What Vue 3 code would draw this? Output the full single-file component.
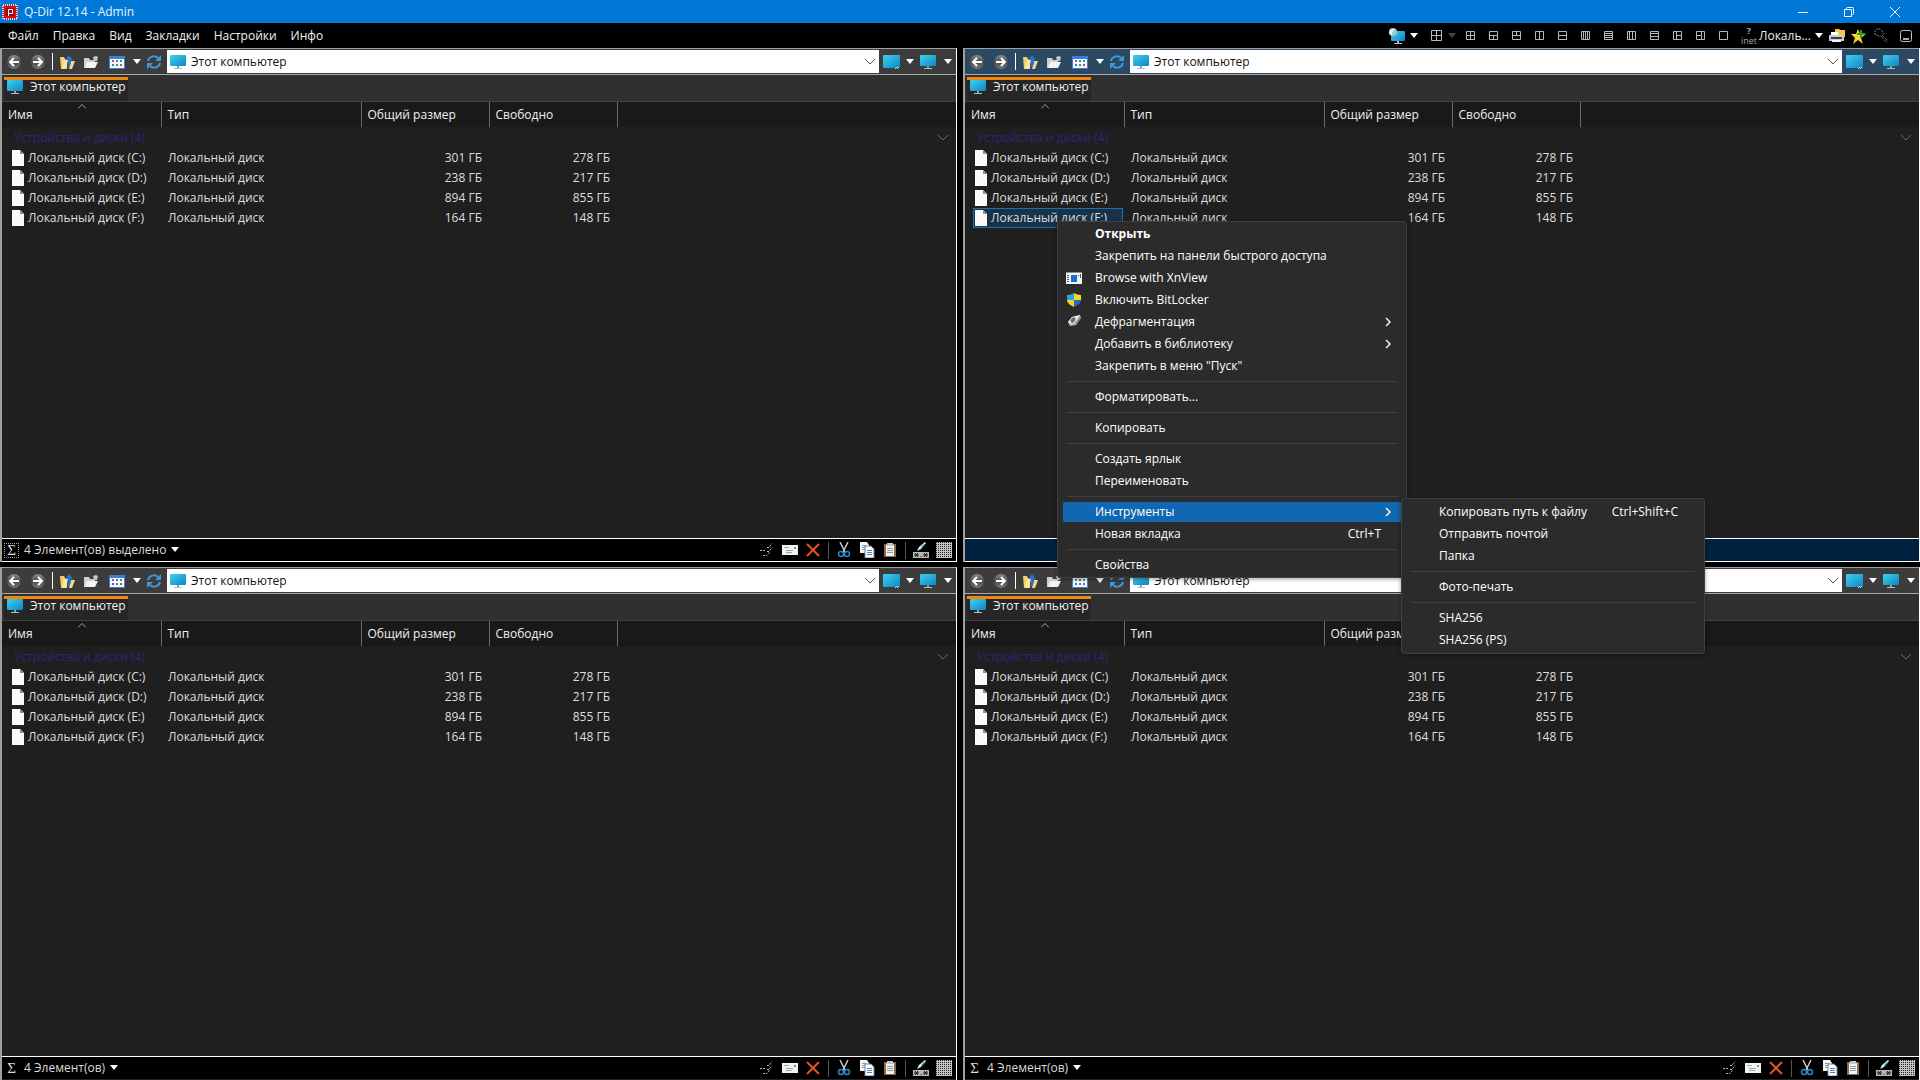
<script setup>
const menus = ['Файл', 'Правка', 'Вид', 'Закладки', 'Настройки', 'Инфо']

// Line paths of the pane layout buttons, drawn inside a 9x9 frame
const layouts = [
  'M4.5 1V8M1 4.5H8',
  'M1 4.5H8M4.5 5V8',
  'M1 4.5H8M4.5 4V1',
  'M4.5 1V8',
  'M1 4.5H8',
  'M2.5 1V8M4.5 1V8M6.5 1V8',
  'M1 2.5H8M1 4.5H8M1 6.5H8',
  'M2.5 1V8M5.5 1V8',
  'M1 2.5H8M1 5.5H8',
  'M3.5 1V8M4 4.5H8',
  'M5.5 1V8M1 4.5H5',
  ''
]

const drives = [
  { name: 'Локальный диск (C:)', type: 'Локальный диск', total: '301 ГБ', free: '278 ГБ' },
  { name: 'Локальный диск (D:)', type: 'Локальный диск', total: '238 ГБ', free: '217 ГБ' },
  { name: 'Локальный диск (E:)', type: 'Локальный диск', total: '894 ГБ', free: '855 ГБ' },
  { name: 'Локальный диск (F:)', type: 'Локальный диск', total: '164 ГБ', free: '148 ГБ' }
]

const panes = [
  { id: 1, status: '4 Элемент(ов) выделено', framed: true },
  { id: 2, status: '', active: true, selected: 3 },
  { id: 3, status: '4 Элемент(ов)' },
  { id: 4, status: '4 Элемент(ов)' }
]

const contextMenu = [
  { label: 'Открыть', bold: true },
  { label: 'Закрепить на панели быстрого доступа' },
  { label: 'Browse with XnView', icon: 'xnview' },
  { label: 'Включить BitLocker', icon: 'shield' },
  { label: 'Дефрагментация', icon: 'defrag', more: true },
  { label: 'Добавить в библиотеку', more: true },
  { label: 'Закрепить в меню "Пуск"' },
  { sep: true },
  { label: 'Форматировать...' },
  { sep: true },
  { label: 'Копировать' },
  { sep: true },
  { label: 'Создать ярлык' },
  { label: 'Переименовать' },
  { sep: true },
  {
    label: 'Инструменты',
    more: true,
    open: true,
    children: [
      { label: 'Копировать путь к файлу', key: 'Ctrl+Shift+C' },
      { label: 'Отправить почтой' },
      { label: 'Папка' },
      { sep: true },
      { label: 'Фото-печать' },
      { sep: true },
      { label: 'SHA256' },
      { label: 'SHA256 (PS)' }
    ]
  },
  { label: 'Новая вкладка', key: 'Ctrl+T' },
  { sep: true },
  { label: 'Свойства' }
]
</script>

<template>
  <div class="app">
    <svg class="sprite" aria-hidden="true">
      <defs>
        <linearGradient id="screen" x1="0" y1="0" x2="1" y2="1">
          <stop offset="0" stop-color="#3fd0ee" />
          <stop offset="1" stop-color="#0f86c4" />
        </linearGradient>
        <linearGradient id="ball" x1="0" y1="0" x2="0" y2="1">
          <stop offset="0" stop-color="#8c8c8c" />
          <stop offset="0.5" stop-color="#4a4a4a" />
          <stop offset="1" stop-color="#777" />
        </linearGradient>
        <pattern id="dots" width="2" height="2" patternUnits="userSpaceOnUse">
          <rect width="2" height="2" fill="#c4c4c4" />
          <rect width="1" height="1" fill="#222" />
        </pattern>
      </defs>
      <symbol id="i-monitor" viewBox="0 0 16 16">
        <rect x="0" y="1" width="16" height="11" rx="1" fill="url(#screen)" />
        <path d="M7 12h2v2H7z" fill="#8a9aa4" />
        <path d="M4 14h8v1H4z" fill="#b4bec4" />
      </symbol>
      <symbol id="i-screen" viewBox="0 0 18 16">
        <rect x="0" y="1" width="17" height="13" rx="1" fill="url(#screen)" />
        <path d="M13 13h1v1h-1zM15 13h1v1h-1zM12 14h1v1h-1zM14 14h1v1h-1z" fill="#bfe8f8" />
      </symbol>
      <symbol id="i-back" viewBox="0 0 16 16">
        <circle cx="8" cy="8" r="7" fill="url(#ball)" />
        <path d="M13 8H4M8 4L4 8l4 4" fill="none" stroke="#fff" stroke-width="2" />
      </symbol>
      <symbol id="i-forward" viewBox="0 0 16 16">
        <circle cx="8" cy="8" r="7" fill="url(#ball)" />
        <path d="M3 8h9M8 4l4 4-4 4" fill="none" stroke="#fff" stroke-width="2" />
      </symbol>
      <symbol id="i-up" viewBox="0 0 16 16">
        <path d="M1 3h4l1 2h2v10H2z" fill="#f2d16b" />
        <path d="M3 15L5 6h4l-2 9z" fill="#fbe79b" />
        <path d="M10 15l2-8h4l-3 8z" fill="#f2d98a" />
        <path d="M10 1l4 5h-2c0 4-1 7-4 8 1-3 1-5 1-8H6z" fill="#2a6fd0" />
      </symbol>
      <symbol id="i-folder" viewBox="0 0 16 16">
        <path d="M1 4h5l1 2h5v3L3 14H1z" fill="#cfcfcf" />
        <path d="M4 8h11l-3 6H2z" fill="#f4f4f4" />
        <path d="M10 3l3-1 2 1-1 4h-3z" fill="#c4c4c4" />
      </symbol>
      <symbol id="i-view" viewBox="0 0 16 16">
        <rect x="0" y="2" width="16" height="13" fill="#3a7fd8" />
        <rect x="1" y="5" width="14" height="9" fill="#f6f8fc" />
        <path d="M3 6h2v2H3zM11 10h2v2h-2z" fill="#d04848" />
        <path d="M7 6h2v2H7zM3 10h2v2H3z" fill="#3a6fd0" />
        <path d="M11 6h2v2h-2zM7 10h2v2H7z" fill="#2f9a62" />
      </symbol>
      <symbol id="i-refresh" viewBox="0 0 16 16">
        <path d="M2 7a6 6 0 0 1 10-3M14 9a6 6 0 0 1-10 3" fill="none" stroke="#3f97dc" stroke-width="2" />
        <path d="M15 1v6H9zM1 15V9h6z" fill="#3f97dc" />
      </symbol>
      <symbol id="i-down" viewBox="0 0 8 6">
        <path d="M0 0h8L4 5z" fill="currentColor" />
      </symbol>
      <symbol id="i-chevron" viewBox="0 0 12 8">
        <path d="M1 1l5 5 5-5" fill="none" stroke="currentColor" />
      </symbol>
      <symbol id="i-more" viewBox="0 0 6 10">
        <path d="M1 1l4 4-4 4" fill="none" stroke="#f2f2f2" stroke-width="1.5" />
      </symbol>
      <symbol id="i-file" viewBox="0 0 12 16">
        <path d="M0 0h8l4 4v12H0z" fill="#fafafa" />
        <path d="M8 0v4h4z" fill="#8f8f8f" />
      </symbol>
      <symbol id="i-xnview" viewBox="0 0 16 16">
        <path d="M0 2h16v12H0z" fill="#f4f4f4" />
        <path d="M0 2h16v1H0z" fill="#8d8d8d" />
        <path d="M5 5h6v7H5z" fill="#1273cf" />
        <path d="M1 5h2v1H1zM1 7h2v1H1zM1 9h2v1H1zM1 11h2v1H1zM12 5h1v1h-1zM14 4h1v4h-1z" fill="#555" />
      </symbol>
      <symbol id="i-shield" viewBox="0 0 16 16">
        <path d="M8 1C6 2 4 3 1 3v5h7z" fill="#2aa3dc" />
        <path d="M8 1c2 1 4 2 7 2v5H8z" fill="#fbd32c" />
        <path d="M1 8h7v7c-4-2-7-4-7-7z" fill="#fbd32c" />
        <path d="M15 8H8v7c4-2 7-4 7-7z" fill="#1b6fc2" />
      </symbol>
      <symbol id="i-defrag" viewBox="0 0 16 16">
        <path d="M2 8l4-5 8-2 1 3-5 7-6 1z" fill="#b9b9b9" />
        <path d="M2 8l4-5 8-2-4 7-5 2z" fill="#ececec" />
        <ellipse cx="7" cy="6" rx="2" ry="3" fill="#6a6a6a" transform="rotate(35 7 6)" />
        <path d="M9 9l5-7 1 2-5 7z" fill="#8c8c8c" />
      </symbol>
      <symbol id="i-checks" viewBox="0 0 16 16">
        <path d="M8 5.5h2l3-4M8 9.5h2l3-4M1 8.5h5M4 13.5h4l3-4" fill="none" stroke="#b6b6b6" stroke-dasharray="2 1" />
      </symbol>
      <symbol id="i-mail" viewBox="0 0 16 16">
        <path d="M0 3h16v10H0z" fill="#f2f2f2" />
        <path d="M12 5h2v2h-2z" fill="#3aa0e0" />
        <path d="M2 5h5v1H2zM4 8h7v1H4zM4 10h6v1H4z" fill="#9aa4ac" />
      </symbol>
      <symbol id="i-delete" viewBox="0 0 16 16">
        <path d="M2 2l12 12M14 2L2 14" stroke="#e2551c" stroke-width="2" />
      </symbol>
      <symbol id="i-cut" viewBox="0 0 16 16">
        <path d="M4 0l5 10M12 0L7 10" stroke="#c8ccd0" stroke-width="1.5" />
        <circle cx="5" cy="12" r="2.5" fill="none" stroke="#2b87c8" stroke-width="1.5" />
        <circle cx="11" cy="12" r="2.5" fill="none" stroke="#2b87c8" stroke-width="1.5" />
      </symbol>
      <symbol id="i-copy" viewBox="0 0 16 16">
        <path d="M1 0h7l2 3v8H1z" fill="#f4f4f4" />
        <path d="M3 3h4v1H3zM3 5h5v1H3zM3 7h3v1H3z" fill="#8a98b0" />
        <path d="M6 4h6l3 3v9H6z" fill="#fff" stroke="#6f8096" stroke-width="1" />
        <path d="M8 8h5v1H8zM8 10h5v1H8zM8 12h5v1H8z" fill="#4a7fc0" />
      </symbol>
      <symbol id="i-paste" viewBox="0 0 16 16">
        <path d="M2 2h12v13H2z" fill="#8a6a4c" />
        <path d="M4 3h8v11H4z" fill="#f2f2f2" />
        <path d="M5 1h6v3H5z" fill="#c4c4c4" />
        <path d="M5 6h6v1H5zM5 8h6v1H5zM5 10h6v1H5z" fill="#8e9aa4" />
      </symbol>
      <symbol id="i-brush" viewBox="0 0 16 16">
        <path d="M4 9l2-4 6-5 1 1-5 6z" fill="#eee" />
        <path d="M8 5l3-3 1 1-3 3z" fill="#1e9ad0" />
        <path d="M0 10h16v6H0z" fill="#b8b8b8" />
        <path d="M2 11l3 4M5 11l-3 4M1 13h5M11 11l3 4M14 11l-3 4M10 13h5M8 14v1" stroke="#161616" />
      </symbol>
      <symbol id="i-raster" viewBox="0 0 16 16">
        <rect width="16" height="16" fill="url(#dots)" />
      </symbol>
      <symbol id="i-net" viewBox="0 0 16 16">
        <rect x="2" y="3" width="14" height="10" rx="1" fill="url(#screen)" />
        <path d="M8 13h2v2H8zM5 15h8v1H5z" fill="#b4bec4" />
        <circle cx="4" cy="4" r="4" fill="#9cc4d8" />
        <path d="M0 4c1-3 4-3 6-3-1 2-3 2-3 6-2 0-3-1-3-3z" fill="#e6f0f2" />
      </symbol>
      <symbol id="i-printer" viewBox="0 0 16 16">
        <path d="M6 1h4l1 1h5v7H6z" fill="#f3c64a" />
        <path d="M2 4h7v4H2z" fill="#fff" />
        <path d="M0 7h15v6H0z" fill="#c9cdd0" />
        <path d="M2 9h11v2H2z" fill="#3a3f44" />
        <path d="M3 12h9v2H3z" fill="#f4f4f4" />
      </symbol>
      <symbol id="i-star" viewBox="0 0 16 16">
        <path d="M7 1l2 5 6 0-5 4 2 6-5-4-5 4 2-6-4-4h5z" fill="#fbd52c" />
        <path d="M9 2h2v3h3v2h-3v3H9V7H6V5h3z" fill="#2f9e2c" />
      </symbol>
      <symbol id="i-tool" viewBox="0 0 16 16">
        <path d="M2 6V3l2-2h3l3 3v3M2 6l3 2h3l6 7M9 7l6 6" fill="none" stroke="#a8a8a8" stroke-dasharray="1 1" />
      </symbol>
      <symbol id="i-panel" viewBox="0 0 14 14">
        <rect x="1.5" y="1.5" width="11" height="11" rx="2" fill="none" stroke="#c8c8c8" />
        <path d="M4 10h6" stroke="#e8e8e8" stroke-width="1.5" />
      </symbol>
    </svg>

    <header class="titlebar">
      <svg class="logo" viewBox="0 0 16 16">
        <rect x="1" y="1" width="14" height="14" fill="#d40f14" stroke="#f2c9c9" stroke-width="2" stroke-dasharray="1 1" />
        <path d="M4 4h8v8H4z" fill="#8c0a0c" />
        <path d="M6.5 12V5.5h4v4h-4" fill="none" stroke="#fff" />
      </svg>
      <h1>Q-Dir 12.14 - Admin</h1>
      <div class="window-buttons">
        <button aria-label="Свернуть"><svg viewBox="0 0 12 12"><path d="M1 6.5h10" /></svg></button>
        <button aria-label="Восстановить">
          <svg viewBox="0 0 12 12"><path d="M1.5 3.5h7v7h-7zM3.5 3V2.5q0-1 1-1h5q1 0 1 1v5q0 1-1 1H9" /></svg>
        </button>
        <button aria-label="Закрыть"><svg viewBox="0 0 12 12"><path d="M1 1l10 10M11 1L1 11" /></svg></button>
      </div>
    </header>

    <nav class="menubar">
      <button v-for="m in menus" :key="m" class="menu">{{ m }}</button>
      <div class="tools">
        <button class="net" aria-label="Сеть"><svg class="s16"><use href="#i-net" /></svg><svg class="down"><use href="#i-down" /></svg></button>
        <button class="quad" aria-label="Вид окон">
          <svg viewBox="0 0 11 11"><path d="M.5 .5h10v10H.5zM5.5 1v9M1 5.5h9" /></svg>
          <svg class="down dim"><use href="#i-down" /></svg>
        </button>
        <button v-for="(d, i) in layouts" :key="i" class="layout" :aria-label="'Раскладка ' + (i + 1)">
          <svg viewBox="0 0 9 9"><path :d="'M.5 .5H8.5V8.5H.5Z' + d" /></svg>
        </button>
        <button class="inet"><b>?</b><span>inet</span></button>
        <button class="local">Локаль...<svg class="down"><use href="#i-down" /></svg></button>
        <button class="tool" aria-label="Печать"><svg class="s16"><use href="#i-printer" /></svg></button>
        <button class="tool" aria-label="Избранное"><svg class="s16"><use href="#i-star" /></svg></button>
        <button class="tool" aria-label="Инструмент"><svg class="s16"><use href="#i-tool" /></svg></button>
        <button class="tool last" aria-label="Панель"><svg class="s14"><use href="#i-panel" /></svg></button>
      </div>
    </nav>

    <main class="workspace">
      <section v-for="p in panes" :key="p.id" class="pane" :class="{ active: p.active }">
        <div class="toolbar">
          <button class="nav" aria-label="Назад"><svg class="s16"><use href="#i-back" /></svg></button>
          <button class="nav" aria-label="Вперёд"><svg class="s16"><use href="#i-forward" /></svg></button>
          <i class="divider"></i>
          <button class="nav" aria-label="Вверх"><svg class="s16"><use href="#i-up" /></svg></button>
          <button class="nav" aria-label="Папка"><svg class="s16"><use href="#i-folder" /></svg></button>
          <button class="pair view" aria-label="Представление"><svg class="s16"><use href="#i-view" /></svg><svg class="down"><use href="#i-down" /></svg></button>
          <button class="refresh" aria-label="Обновить"><svg class="s16"><use href="#i-refresh" /></svg></button>
          <div class="address">
            <svg class="s16"><use href="#i-monitor" /></svg>
            <select aria-label="Адрес"><option>Этот компьютер</option></select>
            <svg class="chevron"><use href="#i-chevron" /></svg>
          </div>
          <button class="pair screen" aria-label="Экран"><svg class="s18"><use href="#i-screen" /></svg><svg class="down"><use href="#i-down" /></svg></button>
          <button class="pair end" aria-label="Компьютер"><svg class="s16"><use href="#i-monitor" /></svg><svg class="down"><use href="#i-down" /></svg></button>
        </div>
        <div class="tabs">
          <button class="tab"><svg class="s16"><use href="#i-monitor" /></svg>Этот компьютер</button>
        </div>
        <div class="list">
          <table>
            <colgroup><col class="c-name" /><col class="c-type" /><col class="c-size" /><col class="c-size" /><col /></colgroup>
            <thead>
              <tr>
                <th scope="col"><svg class="sort" viewBox="0 0 8 5"><path d="M0 4.5l4-4 4 4" /></svg>Имя</th>
                <th scope="col">Тип</th>
                <th scope="col">Общий размер</th>
                <th scope="col">Свободно</th>
                <td></td>
              </tr>
            </thead>
            <tbody>
              <tr class="group">
                <th colspan="5" scope="colgroup"><div>Устройства и диски (4)<svg class="chevron"><use href="#i-chevron" /></svg></div></th>
              </tr>
              <tr v-for="(d, i) in drives" :key="d.name">
                <td class="name"><div :class="{ selected: p.selected === i }"><svg><use href="#i-file" /></svg>{{ d.name }}</div></td>
                <td>{{ d.type }}</td>
                <td class="num">{{ d.total }}</td>
                <td class="num">{{ d.free }}</td>
                <td></td>
              </tr>
            </tbody>
          </table>
        </div>
        <footer class="status">
          <template v-if="p.status">
            <button class="sum" :class="{ framed: p.framed }"><span>Σ</span></button>
            <button class="count">{{ p.status }}<svg class="down"><use href="#i-down" /></svg></button>
            <div class="actions">
              <button aria-label="Отметить"><svg class="s16"><use href="#i-checks" /></svg></button>
              <button aria-label="Почта"><svg class="s16"><use href="#i-mail" /></svg></button>
              <button aria-label="Удалить"><svg class="s16"><use href="#i-delete" /></svg></button>
              <i></i>
              <button aria-label="Вырезать"><svg class="s16"><use href="#i-cut" /></svg></button>
              <button aria-label="Копировать"><svg class="s16"><use href="#i-copy" /></svg></button>
              <button aria-label="Вставить"><svg class="s16"><use href="#i-paste" /></svg></button>
              <i></i>
              <button aria-label="Переименовать"><svg class="s16"><use href="#i-brush" /></svg></button>
              <button aria-label="Сетка"><svg class="s16"><use href="#i-raster" /></svg></button>
            </div>
          </template>
        </footer>

        <ul v-if="p.active" class="popup">
          <li v-for="(m, i) in contextMenu" :key="i" :class="{ sep: m.sep, open: m.open }">
            <button v-if="!m.sep" :class="{ bold: m.bold }">
              <span class="icon"><svg v-if="m.icon" class="s16"><use :href="'#i-' + m.icon" /></svg></span>
              <span>{{ m.label }}</span>
              <kbd v-if="m.key">{{ m.key }}</kbd>
              <svg v-if="m.more" class="more"><use href="#i-more" /></svg>
            </button>
            <ul v-if="m.children" class="popup sub">
              <li v-for="(c, j) in m.children" :key="j" :class="{ sep: c.sep }">
                <button v-if="!c.sep">
                  <span class="icon"></span>
                  <span>{{ c.label }}</span>
                  <kbd v-if="c.key">{{ c.key }}</kbd>
                </button>
              </li>
            </ul>
          </li>
        </ul>
      </section>
    </main>
  </div>
</template>

<style>
body {
  margin: 0;
  background: #000;
}
</style>

<style scoped>
* {
  box-sizing: border-box;
}
.app {
  display: flex;
  flex-direction: column;
  min-height: 100vh;
  background: #000;
  color: #f0f0f0;
  font: 12px/16px "Open Sans", "Noto Sans", sans-serif;
}
.sprite {
  position: absolute;
  width: 0;
  height: 0;
}
svg {
  display: block;
  flex: none;
}
button,
select {
  margin: 0;
  padding: 0;
  border: 0;
  background: none;
  color: inherit;
  font: inherit;
  white-space: nowrap;
}
.s14 { width: 14px; height: 14px; }
.s16 { width: 16px; height: 16px; }
.s18 { width: 18px; height: 16px; }
.down { width: 8px; height: 6px; color: #fff; }
.dim { color: #444; }
.chevron { width: 12px; height: 8px; }

.titlebar {
  display: flex;
  align-items: center;
  height: 23px;
  padding: 0 2px;
  background: #0078d7;
  color: #e6f3ff;
}
.logo { width: 16px; height: 16px; }
h1 {
  margin: 0 0 0 6px;
  font: inherit;
}
.window-buttons {
  display: flex;
  margin-left: auto;
}
.window-buttons button {
  display: flex;
  justify-content: center;
  width: 46px;
}
.window-buttons svg {
  width: 12px;
  height: 12px;
  fill: none;
  stroke: #fff;
}

.menubar {
  display: flex;
  align-items: center;
  gap: 14px;
  height: 25px;
  padding-left: 8px;
}
.tools {
  display: flex;
  align-items: center;
  margin-left: auto;
}
.tools button {
  display: flex;
  align-items: center;
}
.tools .net { gap: 5px; width: 42px; padding-left: 1px; }
.tools .quad { gap: 6px; width: 29px; padding-left: 1px; }
.quad svg:first-child { width: 11px; height: 11px; }
.quad,
.layout {
  fill: none;
  stroke: #b8b8b8;
}
.quad .down { stroke: none; }
.tools .layout {
  justify-content: center;
  width: 23px;
}
.layout svg { width: 9px; height: 9px; }
.tools .inet {
  flex-direction: column;
  width: 20px;
  margin-left: 4px;
  color: #a8a8a8;
  font-size: 9px;
  line-height: 10px;
}
.tools .local {
  justify-content: space-between;
  width: 64px;
  margin-right: 3px;
}
.tools .tool { justify-content: center; width: 22px; }
.tools .last { width: 28px; }

.workspace {
  display: grid;
  grid-template-columns: 1fr 1fr;
  grid-template-rows: calc(50vh - 26px) 1fr;
  gap: 5px 6px;
  flex: 1;
}
.pane {
  position: relative;
  display: flex;
  flex-direction: column;
  min-width: 0;
  border: solid #a0a0a0;
  border-width: 1px 1px 0 2px;
  border-right-color: #fff;
}
.toolbar {
  display: flex;
  align-items: center;
  height: 26px;
  border-bottom: 1px solid #a8a8a8;
  background: #3c3c3c;
}
.active .toolbar { background: #2b4963; }
.nav {
  display: flex;
  justify-content: center;
  width: 24px;
}
.divider {
  width: 1px;
  height: 17px;
  margin: 0 2px;
  background: #fff;
}
.pair {
  display: flex;
  align-items: center;
  gap: 8px;
  width: 37px;
}
.view { margin-left: 6px; }
.screen {
  gap: 5px;
  margin-left: 4px;
}
.end { width: 36px; }
.refresh {
  width: 16px;
  margin-right: 5px;
}
.address {
  display: flex;
  align-items: center;
  flex: 1;
  height: 23px;
  padding: 0 3px;
  background: #fff;
  color: #111;
}
.address select {
  flex: 1;
  padding-left: 5px;
  appearance: none;
}
.address .chevron { color: #555; }

.tabs {
  display: flex;
  align-items: flex-end;
  height: 27px;
  padding-left: 2px;
  border-bottom: 1px solid #404040;
  background: #303030;
}
.tab {
  display: flex;
  align-items: center;
  gap: 7px;
  height: 24px;
  width: 124px;
  padding: 0 3px 7px;
  border-top: 3px solid #f0870e;
  background: #262626;
}

.list {
  flex: 1;
  background: #1f1f1f;
}
table {
  width: 100%;
  table-layout: fixed;
  border-collapse: collapse;
}
.c-name { width: 159px; }
.c-type { width: 200px; }
.c-size { width: 128px; }
th,
td {
  padding: 0 7px;
  font-weight: 400;
  text-align: left;
  white-space: nowrap;
}
thead tr {
  height: 25px;
  background: #191919;
}
thead th {
  position: relative;
  padding-left: 6px;
  border-right: 1px solid #6a6a6a;
}
.sort {
  position: absolute;
  top: 2px;
  left: calc(50% - 3px);
  width: 8px;
  height: 5px;
  fill: none;
  stroke: #a0a0a0;
}
tbody tr { height: 20px; }
tbody td { color: #dedede; }
.group { height: 21px; }
.group th { padding: 0 7px 0 12px; color: #27277c; }
.group div {
  display: flex;
  align-items: center;
  justify-content: space-between;
}
.group .chevron { color: #6a6a6a; }
td.name { padding: 0; }
.name div {
  display: flex;
  align-items: center;
  gap: 4px;
  width: 150px;
  height: 20px;
  margin-left: 8px;
  padding-left: 1px;
  border: 1px solid transparent;
}
.name svg { width: 12px; height: 16px; }
.name .selected {
  border-color: #2171a8;
  background: #18324a;
}
td.num { text-align: right; }

.status {
  display: flex;
  align-items: center;
  height: 24px;
  border: solid #fff;
  border-width: 1px 0;
  padding-left: 2px;
  color: #dcdcdc;
}
.pane:nth-child(n + 3) .status { border-bottom-color: #222; }
.active .status { background: #002240; }
.sum {
  width: 15px;
  height: 15px;
  border: 1px dotted transparent;
  font: 15px/13px "Liberation Serif", serif;
}
.framed { border-color: #a8a8a8; }
.count {
  display: flex;
  align-items: center;
  gap: 5px;
  margin-left: 5px;
}
.actions {
  display: flex;
  align-items: center;
  gap: 7px;
  margin-left: auto;
  padding-right: 4px;
}
.actions i {
  width: 1px;
  height: 17px;
  background: #555;
}

.popup {
  position: absolute;
  z-index: 2;
  top: 172px;
  left: 92px;
  width: 350px;
  margin: 0;
  padding: 1px 5px;
  border: 1px solid #404040;
  border-radius: 3px;
  background: #2b2b2b;
  box-shadow: 0 1px 4px rgba(0, 0, 0, 0.4);
  list-style: none;
}
.popup li {
  position: relative;
  height: 22px;
  padding: 1px 0;
}
.popup li.sep {
  height: 9px;
  padding: 4px 4px;
}
.popup li.sep::before {
  content: "";
  display: block;
  height: 1px;
  background: #404040;
}
.popup button {
  display: flex;
  align-items: center;
  width: 338px;
  height: 20px;
  padding: 0 10px 0 3px;
  border-radius: 2px;
  color: #fff;
}
.popup .open > button { background: #1167b1; }
.popup .bold { font-weight: 700; }
.icon { width: 29px; }
kbd {
  margin-left: auto;
  padding-right: 10px;
  font: inherit;
}
.more {
  width: 6px;
  height: 10px;
  margin-left: auto;
}
.popup .sub {
  top: -3px;
  left: 338px;
  width: 304px;
  padding: 2px 5px;
}
.sub button { width: 291px; }
</style>
